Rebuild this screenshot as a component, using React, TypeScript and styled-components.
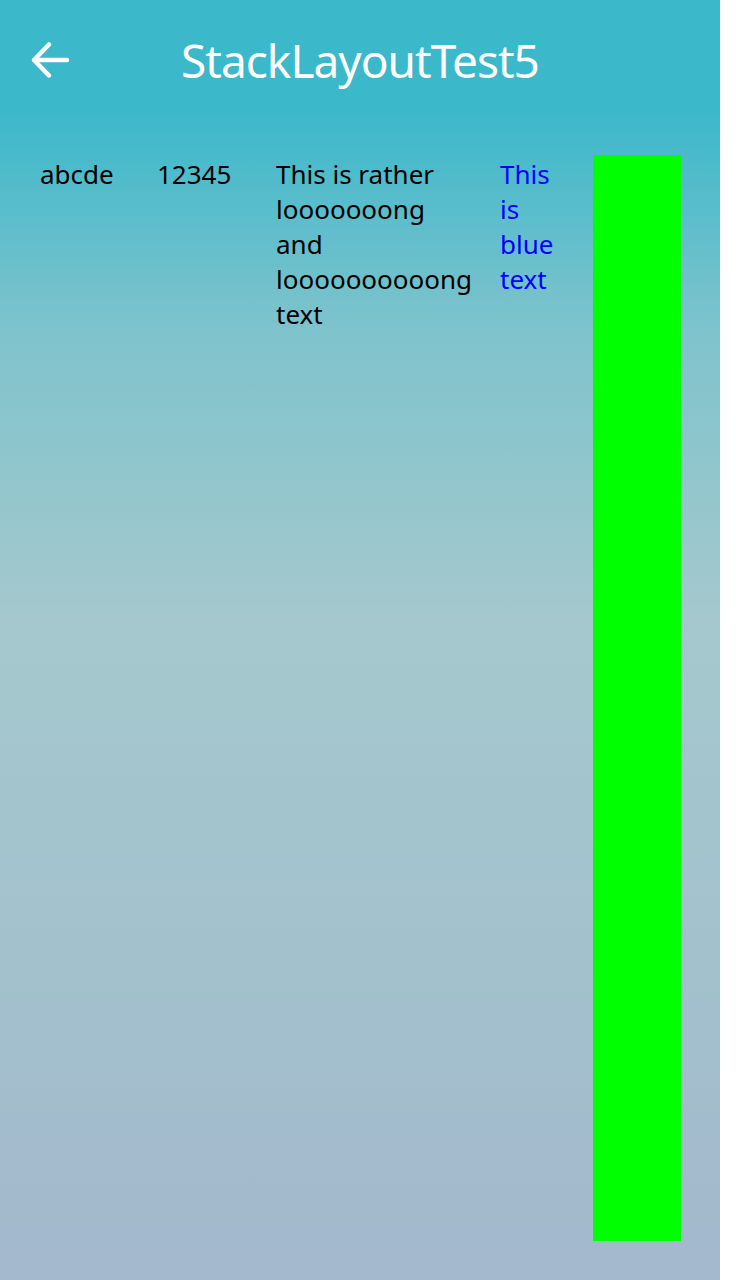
import React from "react";
import styled, { createGlobalStyle } from "styled-components";

const Global = createGlobalStyle`
  html, body { margin: 0; padding: 0; background: #ffffff; }
  #root { width: 736px; height: 1280px; }
`;

const Screen = styled.div`
  width: 720px;
  height: 1280px;
  display: flex;
  flex-direction: column;
  background: linear-gradient(
    to bottom,
    #3cb8cb 0px,
    #3cb8cb 112px,
    #7fc3cc 330px,
    #a4c8cd 620px,
    #a3c2cd 900px,
    #a3b8cd 1280px
  );
  font-family: "Noto Sans", "DejaVu Sans", sans-serif;
`;

const Header = styled.header`
  height: 120px;
  display: grid;
  grid-template-columns: 100px 1fr 100px;
  align-items: center;
`;

const BackButton = styled.button`
  width: 100px;
  height: 120px;
  padding: 0 0 0 26px;
  border: 0;
  background: transparent;
  display: flex;
  align-items: center;
  justify-content: flex-start;
  cursor: pointer;
`;

const Title = styled.h1`
  margin: 0;
  text-align: center;
  color: #ffffff;
  font-size: 46px;
  font-weight: 400;
  letter-spacing: -1px;
  line-height: 1;
`;

const Row = styled.div`
  flex: 1;
  display: flex;
  align-items: stretch;
  gap: 41px;
  padding: 35px 0 39px 40px;
`;

const Label = styled.div<{ $w: number; $color?: string }>`
  width: ${(p) => p.$w}px;
  flex: none;
  margin-top: 2px;
  color: ${(p) => p.$color ?? "#000000"};
  font-size: 26px;
  line-height: 35px;
  align-self: flex-start;
`;

const GreenBox = styled.div`
  width: 88px;
  flex: none;
  background: #00ff00;
`;

function BackArrow() {
  return (
    <svg width="48" height="48" viewBox="0 0 48 48" fill="none">
      <path
        d="M8 24 H41 M8 24 L23 8.5 M8 24 L23 39.5"
        stroke="#ffffff"
        strokeWidth="4.5"
        strokeLinecap="round"
        strokeLinejoin="round"
      />
    </svg>
  );
}

export default function App() {
  return (
    <>
      <Global />
      <Screen>
        <Header>
          <BackButton aria-label="Back">
            <BackArrow />
          </BackButton>
          <Title>StackLayoutTest5</Title>
          <span />
        </Header>
        <Row>
          <Label $w={76}>abcde</Label>
          <Label $w={78}>12345</Label>
          <Label $w={183}>This is rather looooooong and loooooooooong text</Label>
          <Label $w={52} $color="#0000ff">This is blue text</Label>
          <GreenBox />
        </Row>
      </Screen>
    </>
  );
}
